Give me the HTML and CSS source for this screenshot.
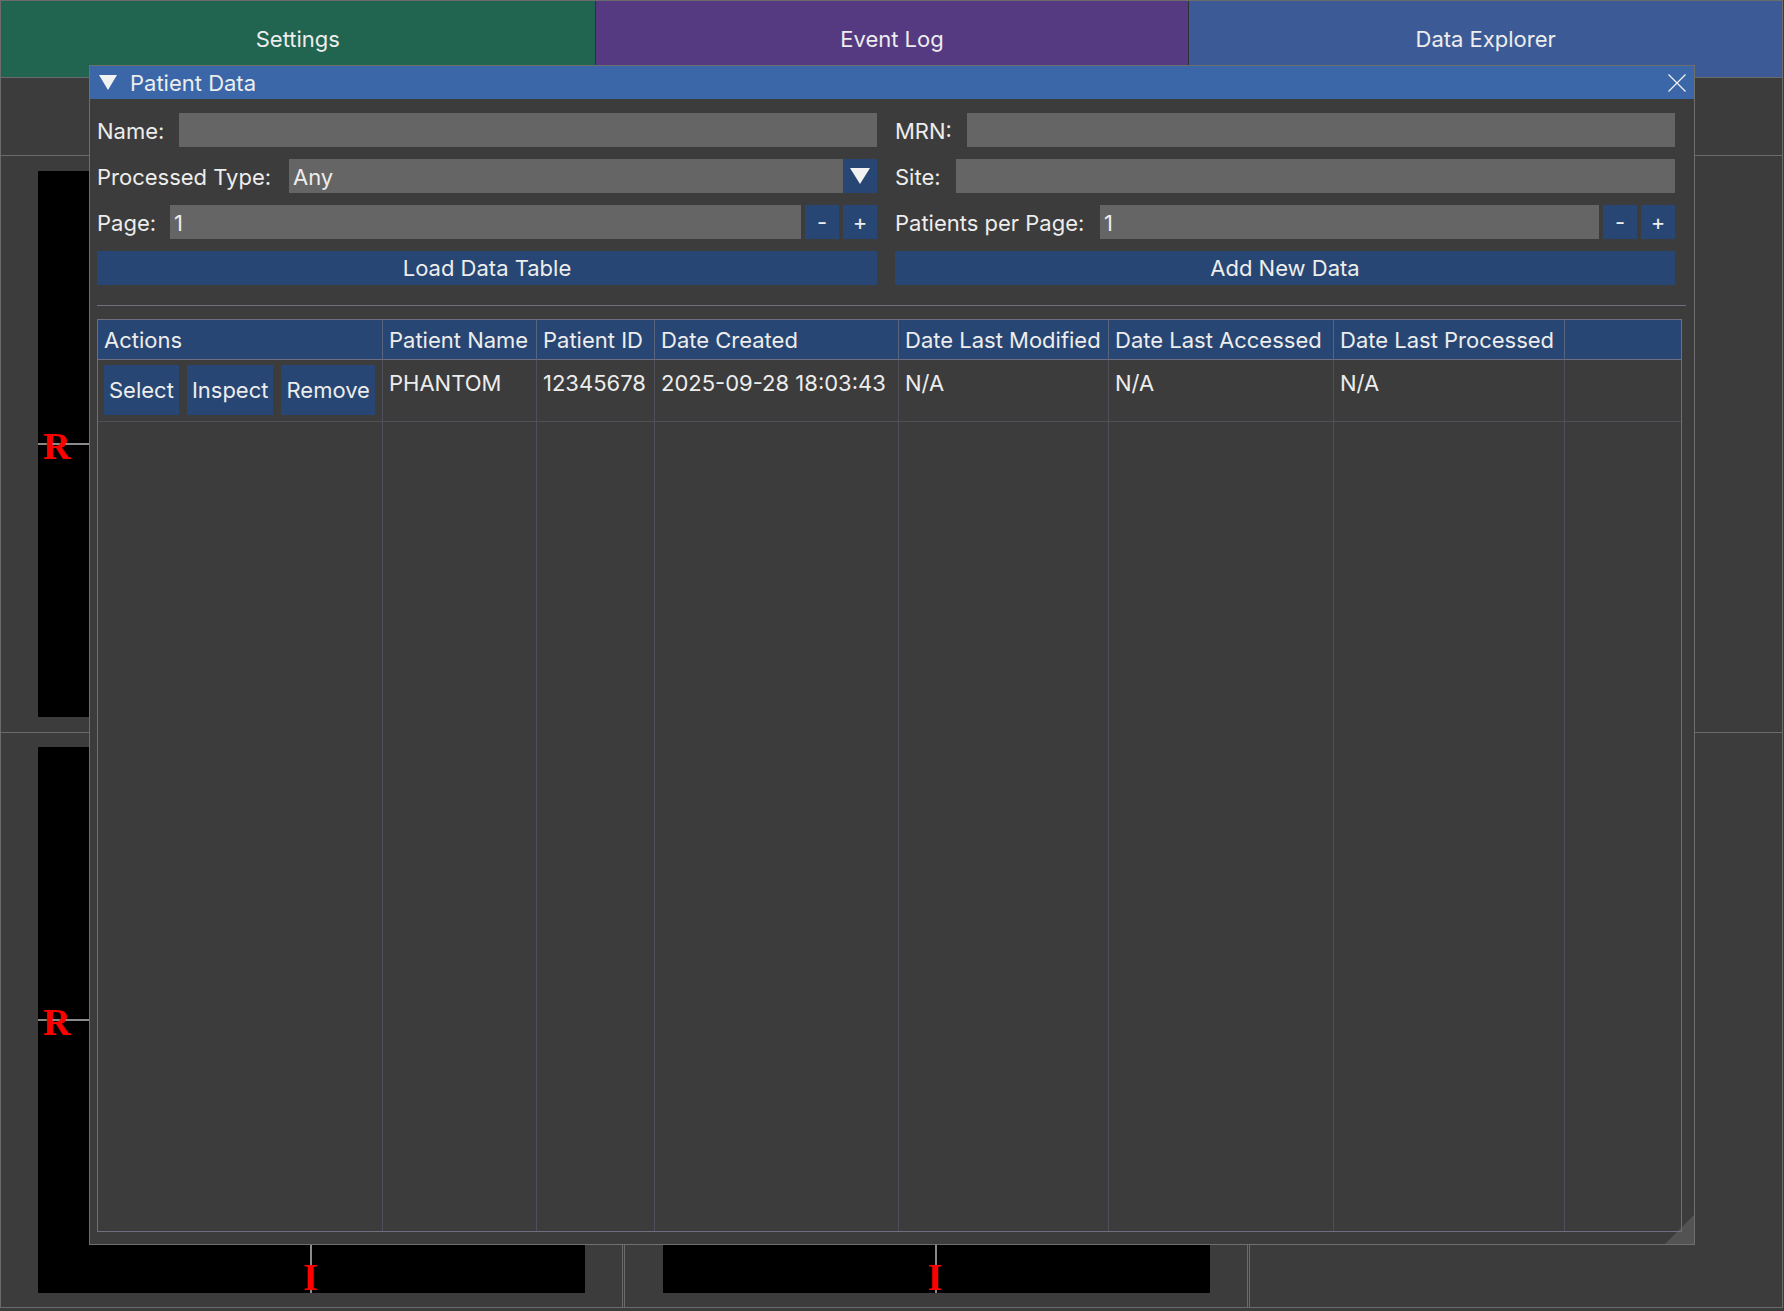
FILE: index.html
```html
<!DOCTYPE html>
<html>
<head>
<meta charset="utf-8">
<title>Patient Data</title>
<link rel="stylesheet" href="styles.css">
</head>
<body>
<div class="app">
  <div class="tabs">
    <div class="tab tab-settings">Settings</div>
    <div class="tab tab-events">Event Log</div>
    <div class="tab tab-data">Data Explorer</div>
  </div>
  <div class="toolbar"></div>
  <div class="views">
    <div class="cell c1 top">
      <div class="viewport">
        <div class="hline"></div><div class="vline"></div>
        <span class="mark mark-r">R</span>
      </div>
    </div>
    <div class="cell c2 top">
      <div class="viewport">
        <div class="hline"></div><div class="vline"></div>
      </div>
    </div>
    <div class="cell c3 top"></div>
    <div class="cell c1">
      <div class="viewport">
        <div class="hline"></div><div class="vline"></div>
        <span class="mark mark-r">R</span>
        <span class="mark mark-i">I</span>
      </div>
    </div>
    <div class="cell c2">
      <div class="viewport">
        <div class="hline"></div><div class="vline"></div>
        <span class="mark mark-i">I</span>
      </div>
    </div>
    <div class="cell c3"></div>
  </div>
</div>

<div class="window">
  <div class="titlebar">
    <svg class="title-arrow" width="18" height="15" viewBox="0 0 18 15"><polygon points="0,0 18,0 9,15" fill="#f2f2f2"/></svg>
    <span class="title-text">Patient Data</span>
    <svg class="close" width="18" height="18" viewBox="0 0 18 18"><path d="M0.5 0.5 L17.5 17.5 M17.5 0.5 L0.5 17.5" stroke="#f2f2f2" stroke-width="1.2" fill="none"/></svg>
  </div>
  <div class="body">
    <div class="form">
      <div class="field"><span class="label w-name">Name:</span><div class="input"></div></div>
      <div class="field"><span class="label w-mrn">MRN:</span><div class="input"></div></div>

      <div class="field"><span class="label w-ptype">Processed Type:</span><div class="input">Any</div>
        <div class="combo-btn"><svg width="20" height="16" viewBox="0 0 20 16"><polygon points="0,0 20,0 10,16" fill="#f2f2f2"/></svg></div></div>
      <div class="field"><span class="label w-site">Site:</span><div class="input"></div></div>

      <div class="field"><span class="label w-page">Page:</span><div class="input">1</div>
        <div class="btn step">-</div><div class="btn step">+</div></div>
      <div class="field"><span class="label w-ppp">Patients per Page:</span><div class="input">1</div>
        <div class="btn step">-</div><div class="btn step">+</div></div>

      <div class="btn wide">Load Data Table</div>
      <div class="btn wide">Add New Data</div>
    </div>
    <div class="separator"></div>
    <div class="table">
      <div class="th">Actions</div>
      <div class="th">Patient Name</div>
      <div class="th">Patient ID</div>
      <div class="th">Date Created</div>
      <div class="th">Date Last Modified</div>
      <div class="th">Date Last Accessed</div>
      <div class="th">Date Last Processed</div>
      <div class="th last"></div>

      <div class="td actions">
        <div class="btn act">Select</div>
        <div class="btn act">Inspect</div>
        <div class="btn act">Remove</div>
      </div>
      <div class="td">PHANTOM</div>
      <div class="td">12345678</div>
      <div class="td">2025-09-28 18:03:43</div>
      <div class="td">N/A</div>
      <div class="td">N/A</div>
      <div class="td">N/A</div>
      <div class="td last"></div>

      <div class="tf"></div><div class="tf"></div><div class="tf"></div><div class="tf"></div>
      <div class="tf"></div><div class="tf"></div><div class="tf"></div><div class="tf last"></div>
    </div>
    <div class="grip"></div>
  </div>
</div>
</body>
</html>
```

FILE: styles.css
```css
* { box-sizing: border-box; }
html, body { margin: 0; padding: 0; }
body {
  width: 1784px;
  height: 1311px;
  overflow: hidden;
  position: relative;
  background: #3c3c3c;
  font-family: Inter, "Noto Sans", sans-serif;
  font-size: 22px;
  color: #ededed;
}

/* ---------- background application ---------- */
.app {
  width: 1783px;
  height: 1308px;
  border: 1px solid #6b6b6b;
  display: flex;
  flex-direction: column;
}
.tabs {
  display: grid;
  grid-template-columns: repeat(3, 1fr);
  height: 77px;
  border-bottom: 1px solid #6b6b6b;
  flex: none;
}
.tab { display: flex; align-items: center; justify-content: center; }
.tab-settings { background: #216450; }
.tab-events { background: #553a82; border-left: 1px solid #2f2f3a; }
.tab-data { background: #3c5b96; border-left: 1px solid #2f2f3a; }

.toolbar { height: 78px; border-bottom: 1px solid #6b6b6b; flex: none; }

.views {
  flex: 1;
  display: grid;
  grid-template-columns: 622px 624px 533px;
  grid-template-rows: 577px 1fr;
  column-gap: 1px;
}
.cell { display: flex; align-items: center; justify-content: center; }
.cell.top { border-bottom: 1px solid #6b6b6b; }
.c1 { border-right: 1px solid #6b6b6b; }
.c2 { border-left: 1px solid #6b6b6b; border-right: 1px solid #6b6b6b; }
.c3 { border-left: 1px solid #6b6b6b; }

.viewport {
  width: 547px;
  height: 546px;
  background: #000;
  position: relative;
}
.hline { position: absolute; left: 0; right: 0; top: 272px; height: 2px; background: #8a8a8a; }
.vline { position: absolute; top: 0; bottom: 0; left: 272px; width: 2px; background: #8a8a8a; }
.mark {
  position: absolute;
  font-family: "Liberation Serif", "DejaVu Serif", serif;
  font-weight: bold;
  font-size: 38px;
  line-height: 38px;
  color: #ff0000;
}
.mark-r { left: 5px; top: 256px; }
.mark-i { left: 265px; top: 511px; }

/* ---------- floating window ---------- */
.window {
  position: absolute;
  left: 89px;
  top: 65px;
  width: 1606px;
  height: 1180px;
  border: 1px solid #6e6e6e;
  background: #3c3c3c;
  display: flex;
  flex-direction: column;
}
.titlebar {
  height: 33px;
  flex: none;
  background: #3b67a9;
  display: flex;
  align-items: center;
  padding: 0 8px 0 9px;
}
.title-arrow { margin-right: 13px; flex: none; }
.title-text { line-height: 34px; }
.close { margin-left: auto; flex: none; }

.body {
  flex: 1;
  display: flex;
  flex-direction: column;
  padding: 14px 0 12px 7px;
  position: relative;
}
.form {
  display: grid;
  grid-template-columns: 780px 780px;
  column-gap: 18px;
  row-gap: 12px;
}
.field { display: flex; height: 34px; }
.label { flex: none; line-height: 36px; white-space: nowrap; }
.w-name { width: 82px; }
.w-mrn { width: 72px; }
.w-ptype { width: 192px; }
.w-site { width: 61px; }
.w-page { width: 73px; }
.w-ppp { width: 205px; }
.input {
  flex: 1;
  height: 34px;
  background: #656565;
  padding-left: 4px;
  line-height: 36px;
}
.combo-btn {
  width: 34px;
  height: 34px;
  background: #284673;
  display: flex;
  align-items: center;
  justify-content: center;
}
.btn {
  background: #284673;
  display: flex;
  align-items: center;
  justify-content: center;
  white-space: nowrap;
  line-height: 36px;
}
.step { width: 34px; height: 34px; margin-left: 4px; flex: none; }
.wide { height: 34px; }

.separator {
  margin-top: 20px;
  width: 1589px;
  height: 1px;
  background: #6e6e80;
  flex: none;
}
.table {
  margin-top: 13px;
  width: 1585px;
  flex: 1;
  display: grid;
  grid-template-columns: 285px 154px 118px 244px 210px 225px 231px 116px;
  grid-template-rows: 40px 62px 1fr;
  border: 1px solid #6e6e80;
  position: relative;
  z-index: 1;
}
.th {
  background: #284673;
  border-right: 1px solid #58637c;
  border-bottom: 1px solid #6e6e80;
  padding: 7px 6px 0;
  line-height: 27px;
  white-space: nowrap;
  overflow: hidden;
}
.td {
  border-right: 1px solid #4f4f59;
  border-bottom: 1px solid #4f4f59;
  padding: 10px 6px 0;
  line-height: 27px;
  white-space: nowrap;
  overflow: hidden;
}
.tf { border-right: 1px solid #4f4f59; }
.last { border-right: none; }
.actions { display: flex; gap: 8px; padding: 5px 6px 0; }
.act { height: 50px; padding: 0 5px; flex: none; line-height: 50px; }

.grip {
  position: absolute;
  right: 0;
  bottom: 0;
  width: 29px;
  height: 29px;
  background: #535353;
  clip-path: polygon(100% 0, 100% 100%, 0 100%);
}
```
